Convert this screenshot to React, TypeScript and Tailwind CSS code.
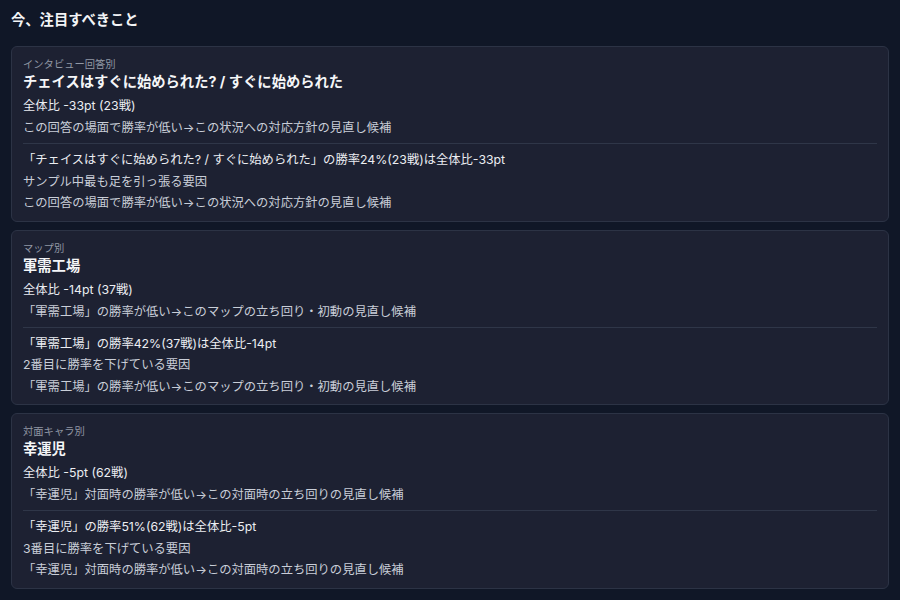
const font = { fontFamily: 'Inter, "Noto Sans CJK JP", sans-serif' };

type Insight = {
  kind: string;
  title: string;
  delta: string;
  hint: string;
  detail: string;
  rank: string;
};

const insights: Insight[] = [
  {
    kind: 'インタビュー回答別',
    title: 'チェイスはすぐに始められた? / すぐに始められた',
    delta: '全体比 -33pt (23戦)',
    hint: 'この回答の場面で勝率が低い→この状況への対応方針の見直し候補',
    detail: '「チェイスはすぐに始められた? / すぐに始められた」の勝率24%(23戦)は全体比-33pt',
    rank: 'サンプル中最も足を引っ張る要因',
  },
  {
    kind: 'マップ別',
    title: '軍需工場',
    delta: '全体比 -14pt (37戦)',
    hint: '「軍需工場」の勝率が低い→このマップの立ち回り・初動の見直し候補',
    detail: '「軍需工場」の勝率42%(37戦)は全体比-14pt',
    rank: '2番目に勝率を下げている要因',
  },
  {
    kind: '対面キャラ別',
    title: '幸運児',
    delta: '全体比 -5pt (62戦)',
    hint: '「幸運児」対面時の勝率が低い→この対面時の立ち回りの見直し候補',
    detail: '「幸運児」の勝率51%(62戦)は全体比-5pt',
    rank: '3番目に勝率を下げている要因',
  },
];

const InsightCard = ({ item }: { item: Insight }) => (
  <div className="rounded-md border border-[#2c3345] bg-[#1d2132] px-[11px] pt-[10px] pb-[7px]">
    <div className="text-[10.3px] leading-[14px] text-[#9097a4]">{item.kind}</div>
    <div className="text-[14.3px] leading-[22px] font-bold text-[#f5f6f8]">{item.title}</div>
    <div className="mt-[2px] text-[12.3px] leading-[22px] text-[#eceef2]">{item.delta}</div>
    <div className="text-[12.3px] leading-[22px] text-[#c9ced8]">{item.hint}</div>
    <div className="mt-[4px] border-t border-[#2f3648] pt-[5px] text-[12.3px] leading-[21.5px]">
      <div className="text-[#eceef2]">{item.detail}</div>
      <div className="text-[#c9ced8]">{item.rank}</div>
      <div className="text-[#c9ced8]">{item.hint}</div>
    </div>
  </div>
);

export default function App() {
  return (
    <div className="min-h-[600px] w-[900px] bg-[#101727] px-[11px] pt-[10px]" style={font}>
      <h2 className="text-[14.3px] leading-[20px] font-bold text-[#f3f4f6]">今、注目すべきこと</h2>
      <div className="mt-[16px] flex flex-col gap-2">
        {insights.map(item => (
          <InsightCard key={item.kind} item={item} />
        ))}
      </div>
    </div>
  );
}
